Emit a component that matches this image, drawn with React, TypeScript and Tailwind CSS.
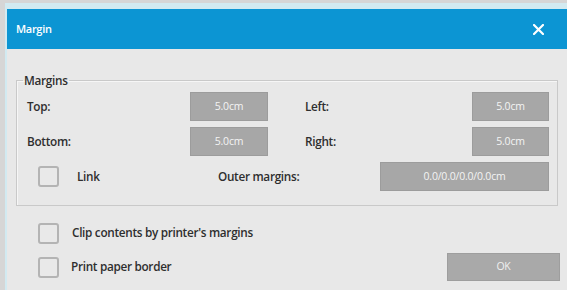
import React from "react";

const font = { fontFamily: '"Open Sans", "Liberation Sans", sans-serif' };

function Box() {
  return (
    <div className="w-[21px] h-[21px] shrink-0 rounded-[3px] border-2 border-[#b4b4b4] bg-[#e9e9e9]" />
  );
}

function Field({ value, w }: { value: string; w: string }) {
  return (
    <div
      className={`${w} h-[29px] shrink-0 bg-[#a7a7a7] border border-[#9c9c9c] flex items-center justify-center text-[10.5px] font-normal tracking-[-0.2px] text-[#f4f4f4]`}
    >
      {value}
    </div>
  );
}

export default function App() {
  return (
    <div
      className="w-[567px] h-[290px] overflow-hidden bg-[#d6d6d6] pt-[3px] pl-[5px]"
      style={font}
    >
      <div className="h-full flex flex-col border-t-[6px] border-l-[2px] border-[#d2eaf1] bg-[#e8e8e8]">
        <div className="h-[40px] shrink-0 bg-[#0c95d3] flex items-center justify-between pl-[9px] pr-[23px]">
          <span className="text-white text-[11px] font-semibold tracking-[-0.3px]">Margin</span>
          <svg width="11" height="11" viewBox="0 0 11 11">
            <path d="M1 1 L10 10 M10 1 L1 10" stroke="#ffffff" strokeWidth="2.2" strokeLinecap="round" />
          </svg>
        </div>

        <div className="flex flex-col pl-[9px] pr-[7px] text-[#2e2e2e] text-[11.75px] font-semibold tracking-[-0.3px]">
          <fieldset className="mt-[24px] mr-[2px] border border-[#c9c9c9] pb-[14px] shadow-[inset_1px_1px_0_#f6f6f6]">
            <legend className="ml-[6px] px-[1px] leading-[14px] text-[#2e2e2e]">Margins</legend>
            <div className="flex flex-col gap-[6px] pt-[5px]">
              <div className="flex items-center pl-[10px] h-[29px]">
                <span className="w-[163px]">Top:</span>
                <Field value="5.0cm" w="w-[78px]" />
                <span className="w-[167px] ml-[37px]">Left:</span>
                <Field value="5.0cm" w="w-[77px]" />
              </div>
              <div className="flex items-center pl-[10px] h-[29px]">
                <span className="w-[163px]">Bottom:</span>
                <Field value="5.0cm" w="w-[78px]" />
                <span className="w-[167px] ml-[37px]">Right:</span>
                <Field value="5.0cm" w="w-[77px]" />
              </div>
              <div className="flex items-center pl-[21px] h-[29px]">
                <Box />
                <span className="w-[141px] ml-[18px]">Link</span>
                <span className="w-[162px]">Outer margins:</span>
                <Field value="0.0/0.0/0.0/0.0cm" w="w-[169px]" />
              </div>
            </div>
          </fieldset>

          <div className="flex items-center pl-[22px] mt-[16px] h-[22px]">
            <Box />
            <span className="ml-[13px]">Clip contents by printer's margins</span>
          </div>
          <div className="flex items-center justify-between pl-[22px] mt-[9px]">
            <div className="flex items-center">
              <Box />
              <span className="ml-[12px]">Print paper border</span>
            </div>
            <div className="w-[113px] h-[28px] bg-[#a9a9a9] border border-[#9e9e9e] flex items-center justify-center text-[10.5px] text-[#f0f0f0] font-normal">
              OK
            </div>
          </div>
        </div>
      </div>
    </div>
  );
}
